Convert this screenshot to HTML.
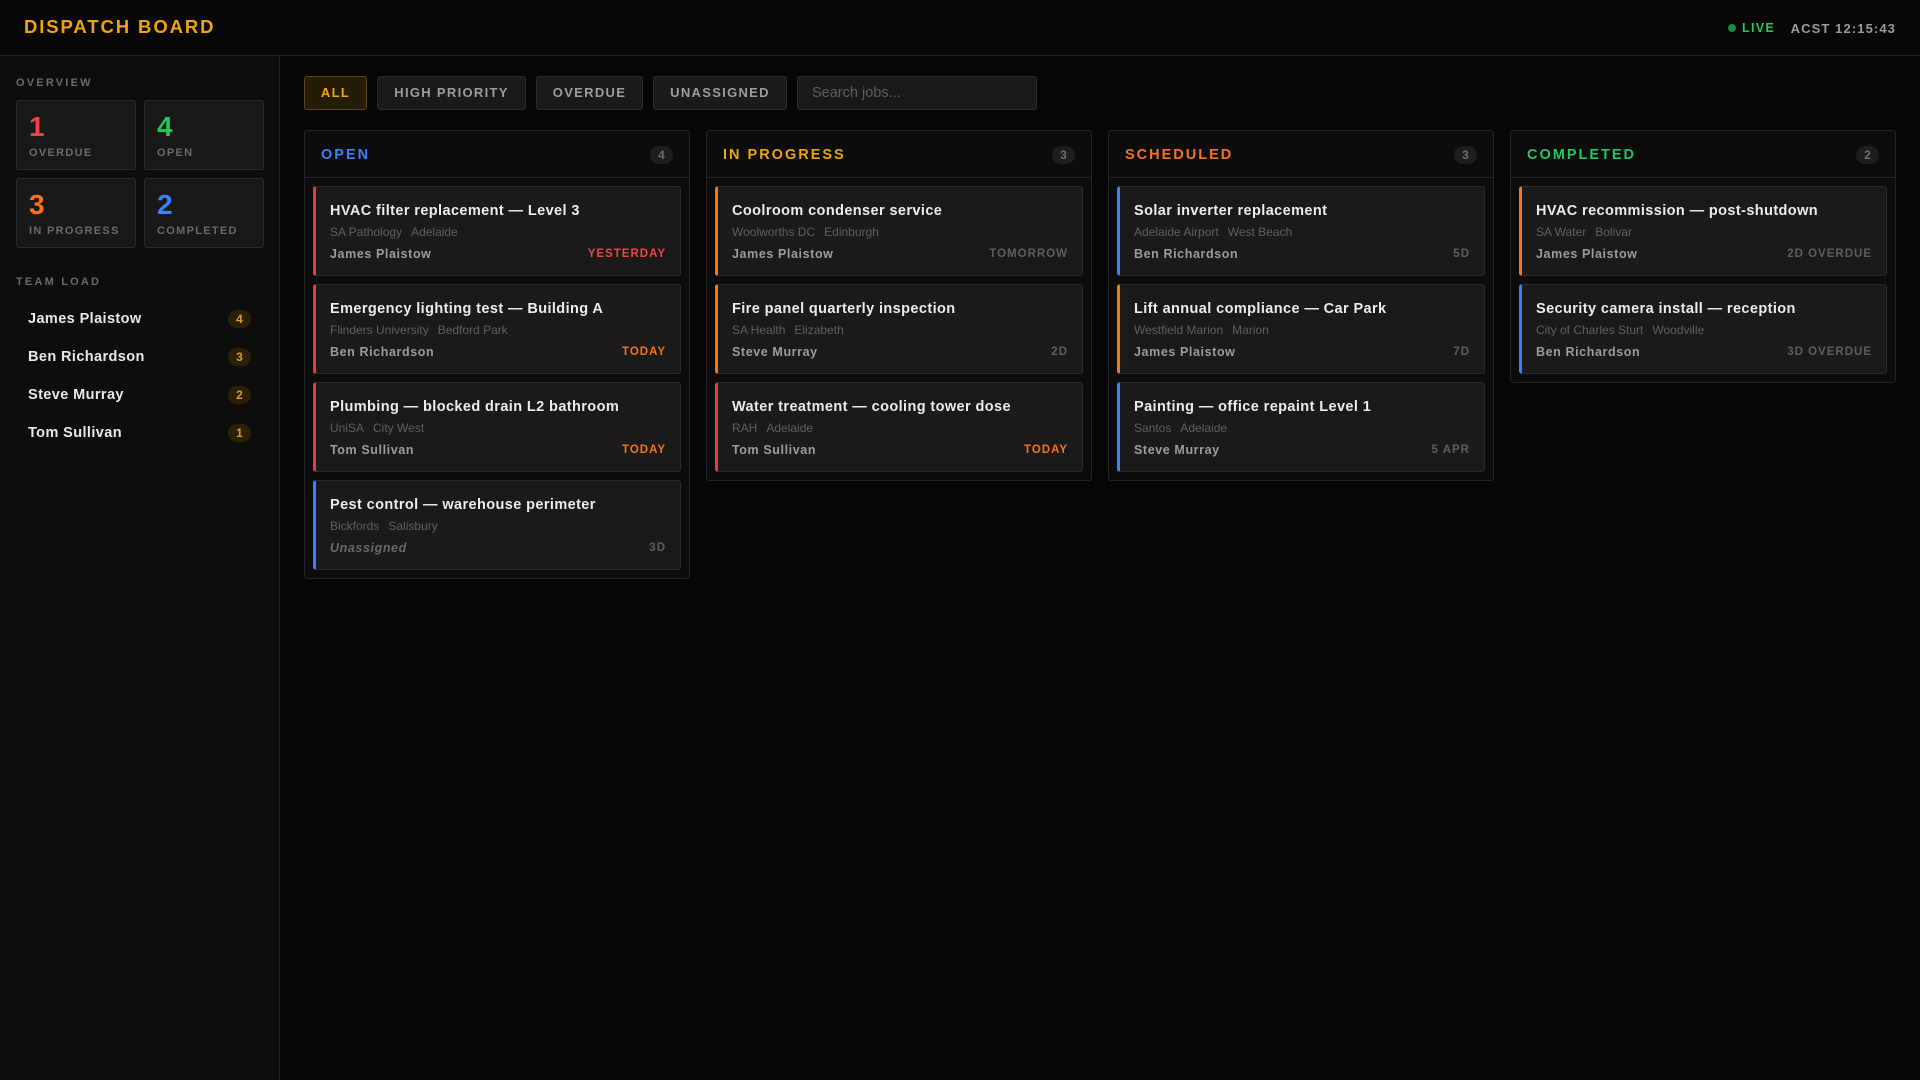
<!DOCTYPE html>
<html><head><style>
*{box-sizing:border-box;margin:0;padding:0}
body{width:1920px;height:1080px;background:#060606;font-family:"Liberation Sans",sans-serif;color:#e5e5e5;overflow:hidden;position:relative}
.hdr{position:absolute;left:0;top:0;width:1920px;height:56px;border-bottom:1px solid #222;background:#070707}
.title{position:absolute;left:24px;top:16px;font-size:18.5px;font-weight:bold;letter-spacing:1.9px;color:#f0a40b}
.live{position:absolute;right:145px;top:21px;font-size:12.5px;font-weight:bold;letter-spacing:1.3px;color:#22c55e}
.live:before{content:"";display:inline-block;width:8px;height:8px;border-radius:50%;background:#178a3e;margin-right:6px;vertical-align:0}
.clock{position:absolute;right:24px;top:21px;font-size:13px;font-weight:bold;letter-spacing:1.1px;color:#9a9a9a}
.side{position:absolute;left:0;top:56px;width:280px;height:1024px;background:#0d0d0d;border-right:1px solid #222}
.lbl{position:absolute;left:16px;font-size:11px;font-weight:bold;letter-spacing:2.2px;color:#6a6a6a}
.stat{position:absolute;width:120px;height:70px;background:#181818;border:1px solid #2a2a2a;border-radius:3px}
.stat b{position:absolute;left:12px;top:10px;font-size:28px}
.stat span{position:absolute;left:12px;top:46px;font-size:11px;font-weight:bold;letter-spacing:1.3px;color:#6a6a6a}
.tm{position:absolute;left:28px;font-size:14.5px;font-weight:bold;letter-spacing:.4px;color:#e8e8e8}
.bd{position:absolute;left:228px;width:23px;height:18px;border-radius:9px;background:#2a2005;color:#e5a00d;font-size:12px;font-weight:bold;text-align:center;line-height:18px}
.btn{position:absolute;top:76px;height:34px;border:1px solid #2c2c2c;border-radius:3px;background:#1a1a1a;color:#9c9c9c;font-size:13px;font-weight:bold;letter-spacing:1.3px;text-align:center;line-height:32px}
.col{position:absolute;top:130px;width:386px;background:#0c0c0c;border:1px solid #242424;border-radius:3px}
.ch{height:47px;border-bottom:1px solid #242424;position:relative}
.ch b{position:absolute;left:16px;top:16px;font-size:14.5px;letter-spacing:2px}
.ch i{position:absolute;right:16px;top:15px;width:23px;height:18px;border-radius:9px;background:#1e1e1e;color:#6e6e6e;font-style:normal;font-size:12px;font-weight:bold;text-align:center;line-height:18px}
.cards{padding:8px 8px 0 8px}
.card{position:relative;height:90px;margin-bottom:8px;background:#1a1a1a;border:1px solid #2a2a2a;border-left:3px solid;border-radius:3px}
.card .t{position:absolute;left:14px;top:16px;font-size:14.5px;font-weight:bold;letter-spacing:.4px;color:#ececec;white-space:nowrap}
.card .s{position:absolute;left:14px;top:38px;font-size:12px;color:#5e5e5e;white-space:nowrap}
.card .s span{margin-right:9px}
.card .a{position:absolute;left:14px;top:60px;font-size:12.5px;font-weight:bold;letter-spacing:.6px;color:#9c9c9c}
.card .d{position:absolute;right:14px;top:61px;font-size:11.5px;font-weight:bold;letter-spacing:1px;color:#5e5e5e}
.r{border-left-color:#e53e3e!important}.o{border-left-color:#f07a17!important}.bl{border-left-color:#3b82f6!important}
</style></head><body>
<div class="hdr"><div class="title">DISPATCH BOARD</div><div class="live">LIVE</div><div class="clock">ACST 12:15:43</div></div>
<div class="side">
<div class="lbl" style="top:21px">OVERVIEW</div>
<div class="stat" style="left:16px;top:44px"><b style="color:#ef4444">1</b><span>OVERDUE</span></div>
<div class="stat" style="left:144px;top:44px"><b style="color:#22c55e">4</b><span>OPEN</span></div>
<div class="stat" style="left:16px;top:122px"><b style="color:#f97316">3</b><span>IN PROGRESS</span></div>
<div class="stat" style="left:144px;top:122px"><b style="color:#3b82f6">2</b><span>COMPLETED</span></div>
<div class="lbl" style="top:220px">TEAM LOAD</div>
<div class="tm" style="top:255px">James Plaistow</div><div class="bd" style="top:254px">4</div>
<div class="tm" style="top:293px">Ben Richardson</div><div class="bd" style="top:292px">3</div>
<div class="tm" style="top:331px">Steve Murray</div><div class="bd" style="top:330px">2</div>
<div class="tm" style="top:369px">Tom Sullivan</div><div class="bd" style="top:368px">1</div>
</div>
<div class="btn" style="left:304px;width:63px;background:#241c06;border-color:#5a4410;color:#f0a40b">ALL</div>
<div class="btn" style="left:377px;width:149px">HIGH PRIORITY</div>
<div class="btn" style="left:536px;width:107px">OVERDUE</div>
<div class="btn" style="left:653px;width:134px">UNASSIGNED</div>
<div class="btn" style="left:797px;width:240px;text-align:left;padding-left:14px;font-weight:normal;letter-spacing:0;font-size:14.5px;color:#5c5c5c">Search jobs...</div>

<div class="col" style="left:304px"><div class="ch"><b style="color:#3b82f6">OPEN</b><i>4</i></div><div class="cards">
<div class="card r"><div class="t">HVAC filter replacement — Level 3</div><div class="s"><span>SA Pathology</span>Adelaide</div><div class="a">James Plaistow</div><div class="d" style="color:#ef4444">YESTERDAY</div></div>
<div class="card r"><div class="t">Emergency lighting test — Building A</div><div class="s"><span>Flinders University</span>Bedford Park</div><div class="a">Ben Richardson</div><div class="d" style="color:#f97316">TODAY</div></div>
<div class="card r"><div class="t">Plumbing — blocked drain L2 bathroom</div><div class="s"><span>UniSA</span>City West</div><div class="a">Tom Sullivan</div><div class="d" style="color:#f97316">TODAY</div></div>
<div class="card bl"><div class="t">Pest control — warehouse perimeter</div><div class="s"><span>Bickfords</span>Salisbury</div><div class="a" style="font-style:italic;color:#6a6a6a">Unassigned</div><div class="d">3D</div></div>
</div></div>

<div class="col" style="left:706px"><div class="ch"><b style="color:#f0a40b">IN PROGRESS</b><i>3</i></div><div class="cards">
<div class="card o"><div class="t">Coolroom condenser service</div><div class="s"><span>Woolworths DC</span>Edinburgh</div><div class="a">James Plaistow</div><div class="d">TOMORROW</div></div>
<div class="card o"><div class="t">Fire panel quarterly inspection</div><div class="s"><span>SA Health</span>Elizabeth</div><div class="a">Steve Murray</div><div class="d">2D</div></div>
<div class="card r"><div class="t">Water treatment — cooling tower dose</div><div class="s"><span>RAH</span>Adelaide</div><div class="a">Tom Sullivan</div><div class="d" style="color:#f97316">TODAY</div></div>
</div></div>

<div class="col" style="left:1108px"><div class="ch"><b style="color:#f97316">SCHEDULED</b><i>3</i></div><div class="cards">
<div class="card bl"><div class="t">Solar inverter replacement</div><div class="s"><span>Adelaide Airport</span>West Beach</div><div class="a">Ben Richardson</div><div class="d">5D</div></div>
<div class="card o"><div class="t">Lift annual compliance — Car Park</div><div class="s"><span>Westfield Marion</span>Marion</div><div class="a">James Plaistow</div><div class="d">7D</div></div>
<div class="card bl"><div class="t">Painting — office repaint Level 1</div><div class="s"><span>Santos</span>Adelaide</div><div class="a">Steve Murray</div><div class="d">5 APR</div></div>
</div></div>

<div class="col" style="left:1510px"><div class="ch"><b style="color:#22c55e">COMPLETED</b><i>2</i></div><div class="cards">
<div class="card o"><div class="t">HVAC recommission — post-shutdown</div><div class="s"><span>SA Water</span>Bolivar</div><div class="a">James Plaistow</div><div class="d">2D OVERDUE</div></div>
<div class="card bl"><div class="t">Security camera install — reception</div><div class="s"><span>City of Charles Sturt</span>Woodville</div><div class="a">Ben Richardson</div><div class="d">3D OVERDUE</div></div>
</div></div>
</body></html>
